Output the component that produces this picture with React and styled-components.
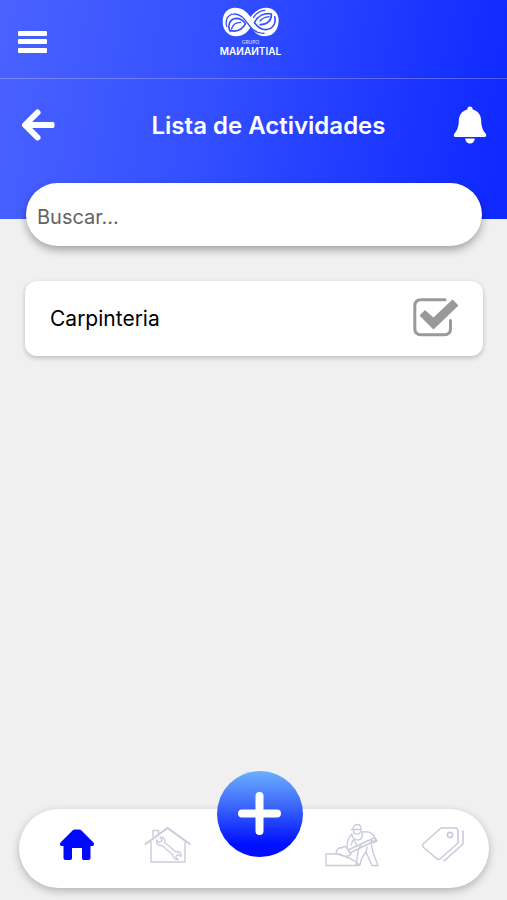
import React from 'react';
import styled, { createGlobalStyle } from 'styled-components';

const GlobalStyle = createGlobalStyle`
  *, *::before, *::after { box-sizing: border-box; }
  body { margin: 0; background: #f0f0f0; font-family: Inter, "Liberation Sans", sans-serif; }
`;

const Page = styled.div`
  min-height: 100vh;
  display: flex;
  flex-direction: column;
`;

const Header = styled.header`
  background: linear-gradient(100deg, #4a62ff 0%, #3450ff 40%, #1a34ff 80%, #1029ff 96%);
  color: #fff;
`;

const TopBar = styled.div`
  height: 79px;
  display: grid;
  grid-template-columns: 1fr auto 1fr;
  padding: 0 24px 0 18px;
  border-bottom: 1px solid rgba(255, 255, 255, 0.25);
`;

const TitleBar = styled.div`
  height: 140px;
  display: grid;
  grid-template-columns: 48px 1fr 48px;
  align-items: start;
  padding: 24px 20px 0;
`;

const IconButton = styled.button`
  display: flex;
  align-items: center;
  justify-content: ${({ $end }) => ($end ? 'flex-end' : 'flex-start')};
  width: 48px;
  height: 44px;
  padding: 0;
  border: 0;
  background: none;
  color: inherit;
  cursor: pointer;
`;

const MenuButton = styled(IconButton)`
  margin-top: 20px;
`;

const Brand = styled.div`
  display: flex;
  flex-direction: column;
  align-items: center;
  padding-top: 7px;
`;

const BrandSmall = styled.span`
  margin-top: 2px;
  font: 400 5px/6px Lato, sans-serif;
  opacity: 0.8;
`;

const BrandName = styled.span`
  font: 600 10px/12px Inter, sans-serif;
`;

const Title = styled.h1`
  margin: 0;
  padding-left: 30px;
  text-align: center;
  font-size: 24px;
  line-height: 46px;
  font-weight: 600;
`;

const Main = styled.main`
  flex: 1;
  margin-top: -36px;
  padding: 0 24px 0 25px;
`;

const SearchForm = styled.form`
  padding: 0 1px;
`;

const Search = styled.input`
  display: block;
  width: 100%;
  height: 63px;
  padding: 4px 11px 0;
  border: 0;
  border-radius: 32px;
  background: #fff;
  box-shadow: 0 4px 8px rgba(0, 0, 0, 0.32);
  color: #000;
  font: 400 20px/28px Inter, "Liberation Sans", sans-serif;
  &::placeholder { color: #636363; opacity: 1; }
`;

const List = styled.ul`
  list-style: none;
  margin: 35px 0 0;
  padding: 0;
`;

const Item = styled.li`
  height: 75px;
  display: flex;
  align-items: center;
  justify-content: space-between;
  padding: 0 24px 0 25px;
  border-radius: 12px;
  background: #fff;
  box-shadow: 0 2px 5px rgba(0, 0, 0, 0.22);
  font-size: 21px;
  line-height: 28px;
`;

const CheckLabel = styled.label`
  display: flex;
  flex: 1;
  align-items: center;
  justify-content: space-between;
  cursor: pointer;
`;

const CheckInput = styled.input`
  appearance: none;
  width: 0;
  height: 0;
  margin: 0;
  &:focus-visible + svg { outline: 2px solid #2244ff; }
`;

const CheckMark = styled.span`
  display: flex;
`;

const Nav = styled.nav`
  height: 79px;
  display: grid;
  grid-template-columns: repeat(5, 1fr);
  justify-items: center;
  align-items: start;
  margin: 0 18px 12px 19px;
  padding-left: 12px;
  border-radius: 40px;
  background: #fff;
  box-shadow: 0 3px 8px rgba(0, 0, 0, 0.26);
`;

const NavLink = styled.a`
  display: flex;
  align-items: center;
  justify-content: center;
  height: 72px;
  color: ${({ $active }) => ($active ? '#0008ff' : '#c9cbdc')};
`;

const AddButton = styled.button`
  display: flex;
  align-items: center;
  justify-content: center;
  width: 86px;
  height: 86px;
  margin-top: -38px;
  padding: 0 0 2px;
  border: 0;
  border-radius: 50%;
  background: linear-gradient(180deg, #6cb0ff 0%, #3c68fa 40%, #0010ff 85%);
  color: #fff;
  cursor: pointer;
`;

const LogoMark = () => (
  <svg width="57" height="30" viewBox="36 20 172 90" fill="none" aria-hidden="true">
    <path d="M76 22C97 22 112 35 122 50C133 35 149 22 168 22C193 22 207 39 207 60C207 86 192 108 166 108C146 108 133 96 122 81C112 97 99 108 80 108C53 108 38 88 38 64C38 39 53 22 76 22Z" fill="#fff" />
    <g stroke="#3450ff" strokeLinecap="round" strokeLinejoin="round">
      <path d="M50 78C45 58 54 42 71 41C91 39 103 55 114 70C126 88 141 101 163 99" strokeWidth="4" />
      <path d="M60 92C52 74 60 55 79 54C91 54 100 60 107 70C99 85 84 96 62 91" strokeWidth="5" />
      <path d="M65 86C68 74 77 66 92 66" strokeWidth="4" />
      <path d="M195 49C200 69 190 86 169 88C153 89 143 79 134 67C144 46 164 36 185 41C186 60 173 73 151 73" strokeWidth="5" />
      <path d="M151 62C158 53 168 50 178 49" strokeWidth="4" />
      <path d="M131 51C140 37 151 31 165 30" strokeWidth="4" />
    </g>
  </svg>
);

const MenuIcon = () => (
  <svg width="29" height="22" viewBox="0 0 29 22" fill="currentColor" aria-hidden="true">
    <rect width="29" height="5" rx="1" />
    <rect y="8" width="29" height="5" rx="1" />
    <rect y="17" width="29" height="5" rx="1" />
  </svg>
);

const BackIcon = () => (
  <svg width="36" height="36" viewBox="0 0 36 36" fill="none" stroke="currentColor" strokeWidth="6" strokeLinejoin="round" strokeLinecap="round" aria-hidden="true">
    <path d="M17.500 5.500L5 18L17.500 30.500" />
    <path d="M6 18H33" strokeLinecap="butt" />
    <rect x="31" y="15.500" width="3" height="5" rx="1" strokeWidth="1" fill="currentColor" />
  </svg>
);

const BellIcon = () => (
  <svg width="34" height="38" viewBox="0 0 34 38" fill="currentColor" aria-hidden="true">
    <path d="M17 0.500C18.700 0.500 19.700 1.700 19.700 3.500C25.500 5 28 9.500 28.200 15C28.400 21 30 24.500 32.500 27.500C34 29.500 33 31 31 31H3C1 31 0 29.500 1.500 27.500C4 24.500 5.600 21 5.800 15C6 9.500 8.500 5 14.300 3.500C14.300 1.700 15.300 0.500 17 0.500Z" />
    <path d="M12.200 32.500H21.800C21.600 35.600 19.600 37.500 17 37.500C14.400 37.500 12.400 35.600 12.200 32.500Z" />
  </svg>
);

const CheckIcon = () => (
  <svg width="46" height="42" viewBox="0 0 46 42" fill="none" stroke="#999" aria-hidden="true">
    <path d="M32 1.800H8Q1.800 1.800 1.800 8V30.500Q1.800 36.800 8 36.800H31.300Q37.500 36.800 37.500 30.500V22.500" strokeWidth="3" strokeLinecap="round" />
    <path d="M7.500 17.500L12 13L20.500 20.500L39.500 2.500L44.500 7.500L20.500 30.500Z" fill="#999" strokeWidth="1.500" strokeLinejoin="round" />
  </svg>
);

const HomeIcon = () => (
  <svg width="36" height="32" viewBox="0 0 36 32" fill="currentColor" aria-hidden="true">
    <path d="M13.500 1.500Q14.500 0.500 16 0.500H20Q21.500 0.500 22.500 1.500L34.500 13.500Q36 17 33 17H31.500V29Q31.500 31 29.500 31H24.500Q23 31 23 29V19H13V29Q13 31 11.500 31H6.500Q4.500 31 4.500 29V17H3Q0 17 1.500 13.500Z" />
  </svg>
);

const RepairIcon = () => (
  <svg width="48" height="38" viewBox="0 0 48 38" fill="none" stroke="currentColor" strokeWidth="1.400" strokeLinejoin="round" aria-hidden="true">
    <path d="M1 18.500L23.500 2L46.500 18.500" strokeWidth="2" />
    <path d="M7 15.500V36H41V15.500M9 11V4.500H14.500V8" />
    <path d="M12.500 14L15.500 16.500L18.500 14L16 11.500C20 11 22 13.500 20.800 16.500L32 26C35.500 25 37.500 27.500 37 30.500L34 28.500L31.500 31L34 33.500C30 34 28.500 31.500 29 29L18 19.500C14.500 20 12 17.500 12.500 14Z" strokeWidth="1.300" />
  </svg>
);

const WorkerIcon = () => (
  <svg width="54" height="44" viewBox="0 0 54 44" fill="none" stroke="currentColor" strokeWidth="1.400" strokeLinejoin="round" strokeLinecap="round" aria-hidden="true">
    <path d="M1 31V42.500H34C33 38 27 38 25 35C19 35 20 31 12 31H1" />
    <path d="M11 30C12 26 14 24 17 25C19 22 22 24 24 28L26 31C23 35 18 33 12 31" />
    <path d="M23 27L49 15L51 17L25 30" />
    <path d="M28 6C28 0 36 0 36 6V7M26.500 6.500H36M28.500 7C28 12 35 13 36 7" />
    <path d="M27 11C23 14 22 20 22 25M26 22L28 17M27 11C27 15 30 17 33 17C37 17 38 13 37 9C43 8 48 9 50 15L52 18L49 20L46 17M29 17L32 23" />
    <path d="M36 22C31 28 33 35 31 42H35C36 36 38 32 41 29L47 42.500H53C50 35 47 29 46 19M41 29L42 24" />
  </svg>
);

const TagsIcon = () => (
  <svg width="44" height="36" viewBox="0 0 44 36" fill="none" stroke="currentColor" strokeWidth="1.600" strokeLinejoin="round" strokeLinecap="round" aria-hidden="true">
    <path d="M20 1H34Q37 1 37 4V16L19 32Q17 33 15 31L2 20Q1 18.500 2 17Z" />
    <circle cx="29" cy="8" r="2.600" />
    <path d="M42 4V17L23 34" />
  </svg>
);

const PlusIcon = () => (
  <svg width="43" height="43" viewBox="0 0 43 43" stroke="currentColor" strokeWidth="8" strokeLinecap="round" aria-hidden="true">
    <path d="M21.500 4V39M4 21.500H39" />
  </svg>
);

const activities = [{ id: 'carpinteria', name: 'Carpinteria' }];

export default function App() {
  return (
    <Page>
      <GlobalStyle />
      <Header>
        <TopBar>
          <MenuButton type="button" aria-label="Menú"><MenuIcon /></MenuButton>
          <Brand>
            <LogoMark />
            <BrandSmall>GRUPO</BrandSmall>
            <BrandName>MAИAИTIAL</BrandName>
          </Brand>
        </TopBar>
        <TitleBar>
          <IconButton type="button" aria-label="Volver"><BackIcon /></IconButton>
          <Title>Lista de Actividades</Title>
          <IconButton type="button" $end aria-label="Notificaciones"><BellIcon /></IconButton>
        </TitleBar>
      </Header>
      <Main>
        <SearchForm role="search">
          <Search type="search" placeholder="Buscar..." aria-label="Buscar" />
        </SearchForm>
        <List>
          {activities.map((activity) => (
            <Item key={activity.id}>
              <CheckLabel>
                {activity.name}
                <CheckMark>
                  <CheckInput type="checkbox" defaultChecked />
                  <CheckIcon />
                </CheckMark>
              </CheckLabel>
            </Item>
          ))}
        </List>
      </Main>
      <Nav aria-label="Principal">
        <NavLink href="#inicio" $active aria-label="Inicio"><HomeIcon /></NavLink>
        <NavLink href="#servicios" aria-label="Servicios"><RepairIcon /></NavLink>
        <AddButton type="button" aria-label="Agregar"><PlusIcon /></AddButton>
        <NavLink href="#trabajadores" aria-label="Trabajadores"><WorkerIcon /></NavLink>
        <NavLink href="#ofertas" aria-label="Ofertas"><TagsIcon /></NavLink>
      </Nav>
    </Page>
  );
}
